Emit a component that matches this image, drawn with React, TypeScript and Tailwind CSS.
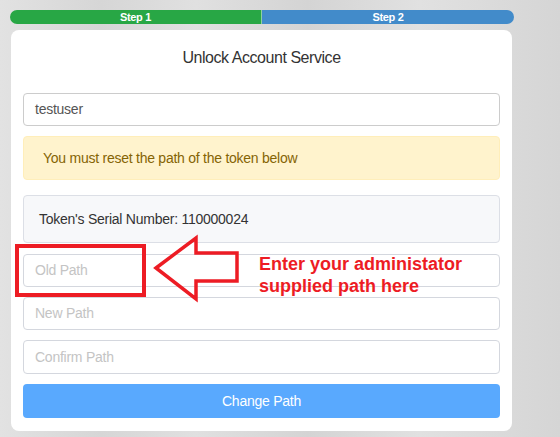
import React from "react";

export default function App() {
  const font = { fontFamily: '"Liberation Sans", Arial, sans-serif' };
  return (
    <div
      className="relative w-[560px] h-[437px] overflow-hidden bg-[#dcdcdc]"
      style={font}
    >
      <div className="absolute inset-0 bg-[linear-gradient(90deg,#e2e2e2_0%,#d6d6d6_18%,#e0e0e0_35%,#d4d4d4_55%,#e1e1e1_75%,#d5d5d5_100%)]" />
      <div className="relative flex flex-col pt-[10px] pl-[10px] w-[514px]">
        <div className="flex h-[14px] w-[504px] rounded-full overflow-hidden text-[11px] font-bold text-white leading-[14px] tracking-[-0.3px]">
          <div className="w-[251px] bg-[#28a745] text-center">Step 1</div>
          <div className="w-[1px] bg-[#8fd19e]" />
          <div className="flex-1 bg-[#428bca] text-center">Step 2</div>
        </div>
        <div className="mt-[6px] ml-[1px] w-[501px] h-[401px] bg-white rounded-lg flex flex-col px-[12px] text-[14px] tracking-[-0.25px]">
          <div className="h-[63px] flex items-center justify-center text-[16px] tracking-[-0.45px] text-[#333] pb-[7px]">
            Unlock Account Service
          </div>
          <div className="h-[33px] border border-[#ccc] rounded-[4px] flex items-center px-[11px] text-[#555]">
            testuser
          </div>
          <div className="mt-[10px] h-[44px] border border-[#ffeeba] bg-[#fff3cd] rounded-[4px] flex items-center px-[19px] text-[#856404]">
            You must reset the path of the token below
          </div>
          <div className="mt-[15px] h-[48px] border border-[#dcdfe6] bg-[#f7f8fa] rounded-[4px] flex items-center px-[15px] text-[#333]">
            Token's Serial Number: 110000024
          </div>
          <div className="mt-[11px] h-[33px] border border-[#d4d7de] rounded-[4px] flex items-center px-[11px] text-[#c4c4c4]">
            Old Path
          </div>
          <div className="mt-[10px] h-[33px] border border-[#d4d7de] rounded-[4px] flex items-center px-[11px] text-[#c4c4c4]">
            New Path
          </div>
          <div className="mt-[10px] h-[34px] border border-[#d4d7de] rounded-[4px] flex items-center px-[11px] text-[#c4c4c4]">
            Confirm Path
          </div>
          <div className="mt-[10px] h-[34px] bg-[#59a9fe] rounded-[4px] flex items-center justify-center text-white">
            Change Path
          </div>
        </div>
      </div>

      <div className="absolute left-[15px] top-[244px] w-[131px] h-[53px] border-[4px] border-[#ed1c24]" />
      <svg
        className="absolute left-[150px] top-[234px]"
        width="95"
        height="70"
        viewBox="0 0 95 70"
      >
        <polygon
          points="6,34 46,4 46,19 87,19 87,47 46,47 46,65"
          fill="none"
          stroke="#ed1c24"
          strokeWidth="3.5"
          strokeLinejoin="miter"
        />
      </svg>
      <div className="absolute left-[259px] top-[253px] text-[18px] font-bold leading-[22px] text-[#ed1c24]">
        <div>Enter your administator</div>
        <div>supplied path here</div>
      </div>
    </div>
  );
}
